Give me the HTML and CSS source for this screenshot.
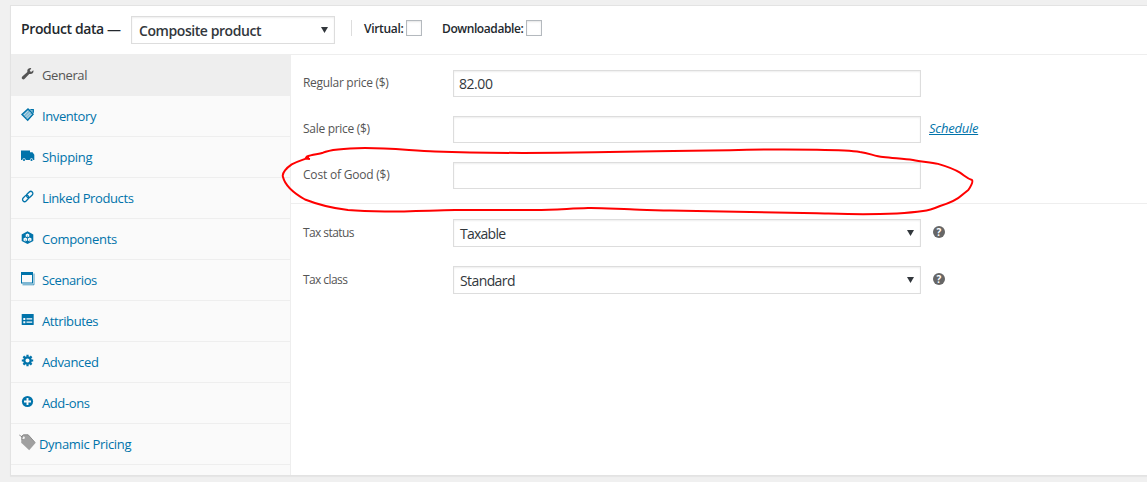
FILE: index.html
```html
<!DOCTYPE html>
<html lang="en">
<head>
<meta charset="utf-8">
<title>Product data</title>
<link rel="stylesheet" href="styles.css">
</head>
<body>
<section class="postbox">
  <header class="head">
    <h2 class="title">Product data —</h2>
    <div class="select select-type"><span class="w-composite">Composite product</span><svg class="arrow" viewBox="0 0 7 6"><path d="M0 0h7L3.500 6z"/></svg></div>
    <label class="check check-first"><span class="w-virtual">Virtual:</span><input type="checkbox"></label>
    <label class="check"><span class="w-download">Downloadable:</span><input type="checkbox"></label>
  </header>
  <div class="body">
    <ul class="tabs">
      <li class="tab active"><svg class="icon" viewBox="0 0 14 14"><path d="M12.300 3.200 10.100 5 8.700 3.700 10.300 1.200C8.500.7 6.500 1.700 6.300 3.600c0 .7 0 1.100.1 1.500L1.300 9.500c-.8.8-.7 1.900 0 2.500.7.6 1.700.5 2.400-.2l4.500-4.800c2.700.5 4.900-1.200 4.100-3.800z"/></svg><span>General</span></li>
      <li class="tab"><svg class="icon" viewBox="0 0 14 14"><path d="M1 6.500 6.500 1.200h5.200l.8 1v4.500L6.800 12z" fill-opacity=".5"/><path d="M.9 6.500 7 .9l5 5.300-5.300 6z" fill="none" stroke="currentColor" stroke-width="1.300"/><path d="M9.500 1.500h2.800v3.300" fill="none" stroke="currentColor" stroke-width="1.200"/><path d="m3 7 4-4m-2.500 6 5-5M6 10.500l4.500-4.500" fill="none" stroke="#fff" stroke-width=".5"/></svg><span class="w-inventory">Inventory</span></li>
      <li class="tab"><svg class="icon" viewBox="0 0 14 14"><path d="M0 1.500h9v1.700h2.500L13.300 5.700V11H0z"/><circle cx="3" cy="11" r="1.700" fill="#fafafa"/><circle cx="10.500" cy="11" r="1.700" fill="#fafafa"/><circle cx="3" cy="11" r="1.100"/><circle cx="10.500" cy="11" r="1.100"/></svg><span class="w-shipping">Shipping</span></li>
      <li class="tab"><svg class="icon" viewBox="0 0 14 14"><g fill="none" stroke="currentColor" stroke-width="1.300"><rect x="-3.600" y="-2.100" width="7.200" height="4.200" rx="2.100" transform="translate(8.700 4.500) rotate(-45)"/><rect x="-3.600" y="-2.100" width="7.200" height="4.200" rx="2.100" transform="translate(4.700 8.400) rotate(-45)"/></g></svg><span class="w-linked">Linked Products</span></li>
      <li class="tab"><svg class="icon" viewBox="0 0 14 14"><path d="M6.500.3 12.300 3.400v6.500L6.500 13 .7 9.900V3.400z"/><g fill="#fafafa"><path d="m6.500 2.500 1.800.9v2l-1.800.9-1.800-.9v-2zM4.300 6.600l1.800.9v2l-1.800.9-1.800-.9v-2zM8.700 6.600l1.800.9v2l-1.800.9-1.800-.9v-2z"/></g><path d="M6.500 4.300v2M4.300 8.400v2M8.700 8.400v2" fill="none" stroke="currentColor" stroke-width=".5"/></svg><span class="w-components">Components</span></li>
      <li class="tab"><svg class="icon" viewBox="0 0 14 14"><path d="M0 0h12v11.500H0zM1 3v7.500h10V3z" fill-rule="evenodd"/><path d="M1.500 12.800h11.500V1.500" fill="none" stroke="currentColor" stroke-opacity=".7" stroke-width="1"/></svg><span>Scenarios</span></li>
      <li class="tab"><svg class="icon" viewBox="0 0 14 14"><rect x=".7" y="1" width="12" height="11" rx=".6"/><path d="M2.300 5h2v2h-2zM5.500 5.300h5.700v1.200H5.500zM2.300 8.200h2v2h-2zM5.500 8.600h5.700v1.200H5.500z" fill="#fafafa"/></svg><span class="w-attributes">Attributes</span></li>
      <li class="tab"><svg class="icon" viewBox="0 0 14 14"><circle cx="6.500" cy="6.500" r="3.200" fill="none" stroke="currentColor" stroke-width="2.300"/><g stroke="currentColor" stroke-width="2.200"><path d="M6.500.8v2M6.500 10.200v2M.8 6.500h2M10.200 6.500h2M2.400 2.400l1.500 1.500M9.100 9.100l1.500 1.500M2.400 10.600l1.500-1.500M9.100 3.900l1.500-1.500"/></g></svg><span class="w-advanced">Advanced</span></li>
      <li class="tab"><svg class="icon" viewBox="0 0 14 14"><circle cx="6.500" cy="6.500" r="5.600"/><path d="M6.500 3v7M3 6.500h7" stroke="#fafafa" stroke-width="1.900"/></svg><span>Add-ons</span></li>
      <li class="tab dynamic"><svg class="tag" viewBox="0 0 17 17"><path d="M2.500 2 4.500.8h4.700L16.500 9l-6.300 7.200-8-7.400z" fill="#a0a0a0"/><path d="M3 6V2L4.500.8h4.700l7 7.800" fill="none" stroke="#858585" stroke-width=".9"/><circle cx="4.500" cy="3.700" r="1.300" fill="#fafafa"/><path d="m.3 1 3.800 2.600" stroke="#777" stroke-width=".8"/></svg><span class="w-dynamic">Dynamic Pricing</span></li>
    </ul>
    <div class="panel">
      <div class="group group-price">
        <div class="row"><label>Regular price ($)</label><input class="field" type="text" value="82.00"></div>
        <div class="row"><label>Sale price ($)</label><input class="field" type="text"><a class="schedule">Schedule</a></div>
        <div class="row"><label class="w-cost">Cost of Good ($)</label><input class="field" type="text"></div>
      </div>
      <div class="group group-tax">
        <div class="row"><label>Tax status</label><div class="select"><span class="w-taxable">Taxable</span><svg class="arrow" viewBox="0 0 7 6"><path d="M0 0h7L3.500 6z"/></svg></div><span class="help">?</span></div>
        <div class="row"><label>Tax class</label><div class="select"><span class="w-standard">Standard</span><svg class="arrow" viewBox="0 0 7 6"><path d="M0 0h7L3.500 6z"/></svg></div><span class="help">?</span></div>
      </div>
    </div>
  </div>
</section>
<svg class="annotation" viewBox="0 0 1147 482"><path d="M310 159 305.500 158.500 306.700 156.700C312 154 318 154.500 323 152.700 330 149.500 345 148.300 365 148 391 148 412 150.600 435 151.500 480 153.200 550 153 595 152.300 650 151 700 150.500 730 150.200 760 149.300 790 149.200 817 149.700 838 150 850 150.200 860 151.900 870 153.300 875 156.500 883 157 894 158.200 904 158.800 913 160 922 162 930 162 938 163.900 947 166.500 955 169.500 960 172.700 965 176 967 178.500 972 180 973.500 182 971 186 968.300 190L963 194.300C958 199 952 202.500 940 206 934 208.500 928 210.500 923 211 914 212.300 906 212.900 897 213.400 880 214.200 872 214.200 863 214.200 845 214 830 213.500 817 213.200L750 212 670 210.600C650 210 640 209.800 630 209.300 610 208.500 600 207.800 588 208 570 208.500 555 209.800 535 210L455 210C430 210.500 410 211.500 385 211.500 370 211.300 360 211 348 210 330 208 319 205 305 199.500 289 190.500 284.500 183 283 177 281.500 173 287 167.500 291.700 164.300 298 161 303 160 309 157.300"/></svg>
</body>
</html>
```
FILE: styles.css
```css
* { box-sizing: border-box; }
body {
  margin: 0;
  height: 482px;
  overflow: hidden;
  background: #f0f0f0;
  color: #32373c;
  font-family: "Open Sans", "Noto Sans", sans-serif;
  font-size: 13px;
  position: relative;
}
.postbox {
  margin: 5px 0 0 10px;
  height: 471px;
  background: #fff;
  border: 1px solid #e3e3e3;
  border-right: 0;
  box-shadow: 0 1px 1px rgba(0,0,0,.04);
}
.head {
  height: 49px;
  padding: 10px 0 0 10px;
  border-bottom: 1px solid #eee;
  display: flex;
  align-items: flex-start;
}
.title {
  margin: 0;
  width: 110px;
  padding-top: 3px;
  font-size: 14px;
  line-height: 20px;
  font-weight: 600;
  color: #23282d;
  white-space: nowrap;
  letter-spacing: -.38px;
}
.select {
  width: 468px;
  height: 28px;
  padding: 0 6px;
  display: flex;
  align-items: center;
  justify-content: space-between;
  background: #fff;
  border: 1px solid #ddd;
  box-shadow: inset 0 1px 2px rgba(0,0,0,.07);
  font-size: 14px;
  white-space: nowrap;
}
.select-type { width: 204px; font-weight: 600; padding-left: 7px; }
.w-composite { letter-spacing: -.43px; }
.w-taxable { letter-spacing: -.75px; }
.w-standard { letter-spacing: -.6px; }
.arrow { width: 7px; height: 6px; fill: #32373c; flex: none; }
.check {
  display: flex;
  align-items: center;
  gap: 3px;
  height: 16px;
  margin: 4px 0 0 20px;
  font-size: 12px;
  font-weight: 600;
  color: #23282d;
  white-space: nowrap;
}
.check-first { margin-left: 16px; padding-left: 12px; border-left: 1px solid #ddd; }
.check span { line-height: 16px; padding-top: 2px; }
.w-virtual { width: 39px; letter-spacing: -.3px; }
.w-download { width: 81px; letter-spacing: -.4px; }
.check input {
  appearance: none;
  margin: 0;
  width: 16px;
  height: 16px;
  border: 1px solid #b4b9be;
  background: #fff;
  box-shadow: inset 0 1px 2px rgba(0,0,0,.1);
}
.body { display: flex; height: 420px; }
.tabs {
  width: 280px;
  margin: 0;
  padding: 0;
  list-style: none;
  background: #fafafa;
  border-right: 1px solid #eee;
}
.tab {
  height: 41px;
  padding: 0 0 0 10px;
  border-bottom: 1px solid #eee;
  display: flex;
  align-items: center;
  gap: 7px;
  color: #0073aa;
  white-space: nowrap;
  letter-spacing: -.4px;
}
.w-shipping, .w-components { letter-spacing: -.3px; }
.w-advanced { letter-spacing: -.35px; }
.tab.active { background: #eee; color: #555; }
.icon { width: 14px; height: 14px; fill: currentColor; margin-bottom: 3px; }
.dynamic { padding-left: 8px; gap: 3px; }
.tag { width: 17px; height: 17px; margin-bottom: 3px; }
.w-dynamic { letter-spacing: -.32px; }
.panel { flex: 1; }
.group { padding-left: 12px; display: flex; flex-direction: column; }
.group-price { height: 149px; padding-top: 15px; gap: 19px; border-bottom: 1px solid #eee; }
.group-tax { padding-top: 15px; gap: 19px; }
.row { display: flex; align-items: flex-start; }
.row label {
  width: 150px;
  padding-top: 1px;
  font-size: 12px;
  line-height: 24px;
  color: #555;
  letter-spacing: -.3px;
}
.row .w-cost { letter-spacing: -.2px; }
.group-tax .row label { padding-top: 2px; letter-spacing: -.58px; }
.field {
  width: 468px;
  height: 27px;
  margin: 0;
  padding: 1px 5px;
  border: 1px solid #ddd;
  box-shadow: inset 0 1px 2px rgba(0,0,0,.07);
  background: #fff;
  color: #32373c;
  font: 14px "Open Sans", "Noto Sans", sans-serif;
  letter-spacing: -.45px;
}
.schedule {
  margin-left: 8px;
  line-height: 24px;
  font-style: italic;
  color: #0073aa;
  text-decoration: underline;
  letter-spacing: -.25px;
}
.help {
  width: 12px;
  height: 12px;
  margin: 7px 0 0 12px;
  border-radius: 50%;
  background: #666;
  color: #fff;
  font-size: 10px;
  font-weight: 700;
  line-height: 12px;
  text-align: center;
}
.annotation {
  position: absolute;
  left: 0;
  top: 0;
  width: 1147px;
  height: 482px;
  fill: none;
  stroke: #f00;
  stroke-width: 2;
  stroke-linejoin: round;
  pointer-events: none;
}
```
